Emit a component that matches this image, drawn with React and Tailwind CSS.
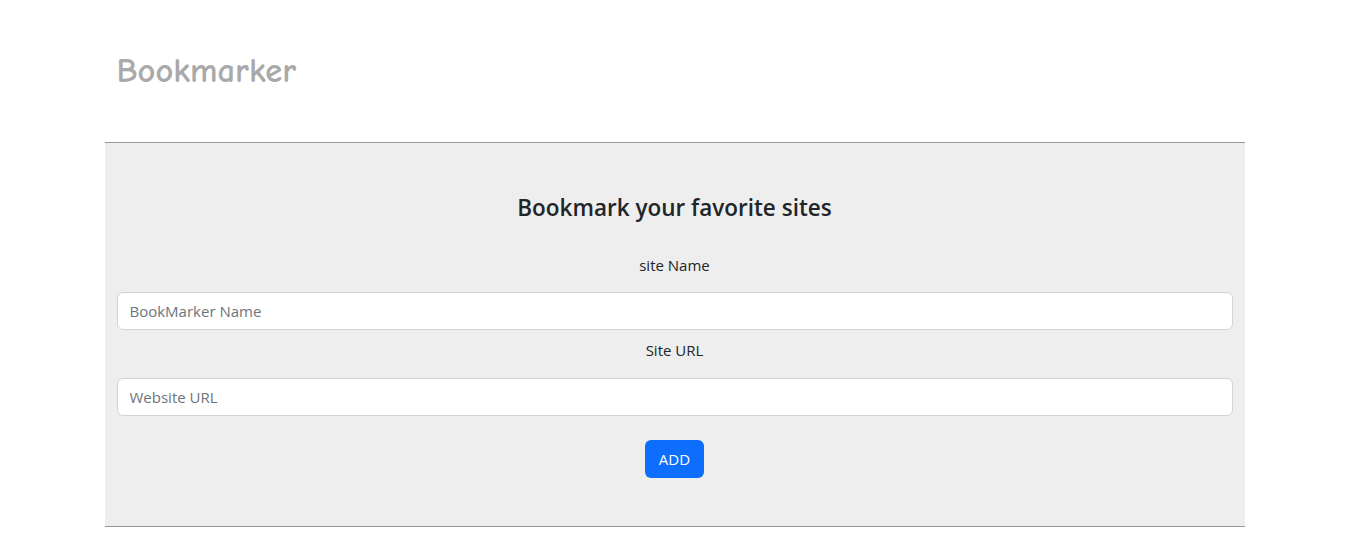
import React, { useState } from 'react';

const App = () => {
  const [siteName, setSiteName] = useState('');
  const [siteUrl, setSiteUrl] = useState('');

  return (
    <div className="min-h-screen bg-white text-[#212529] font-['Open_Sans','Noto_Sans',sans-serif]">
      {/* Header */}
      <div className="mx-auto w-[1140px] px-3 pt-[48px] pb-[48px]">
        <h1 className="text-[34.5px] leading-[46px] font-extrabold text-[#a9a9a9] font-['Comic_Sans_MS','Comic_Neue',cursive]">
          Bookmarker
        </h1>
      </div>

      {/* Form */}
      <div className="mx-auto w-[1140px] bg-[#eeeeee] border-t border-b border-[#999999] px-3 pt-[50px] pb-[48px]">
        <h2 className="text-center text-[22.5px] leading-[29px] font-semibold">
          Bookmark your favorite sites
        </h2>

        <label className="block text-center text-[15px] leading-6 mt-[31px]">site Name</label>
        <input
          type="text"
          value={siteName}
          onChange={(e) => setSiteName(e.target.value)}
          placeholder="BookMarker Name"
          className="mt-[15px] block w-full h-[38px] rounded-md border border-[#ced4da] bg-white px-3 text-[15px] text-[#212529] placeholder:text-[#6c757d] outline-none"
        />

        <label className="block text-center text-[15px] leading-6 mt-[8px]">Site URL</label>
        <input
          type="text"
          value={siteUrl}
          onChange={(e) => setSiteUrl(e.target.value)}
          placeholder="Website URL"
          className="mt-[16px] block w-full h-[38px] rounded-md border border-[#ced4da] bg-white px-3 text-[15px] text-[#212529] placeholder:text-[#6c757d] outline-none"
        />

        <div className="flex justify-center mt-6">
          <button
            type="button"
            className="h-[38px] w-[59px] rounded-md bg-[#0d6efd] text-white text-[15px]"
          >
            ADD
          </button>
        </div>
      </div>
    </div>
  );
};

export default App;
